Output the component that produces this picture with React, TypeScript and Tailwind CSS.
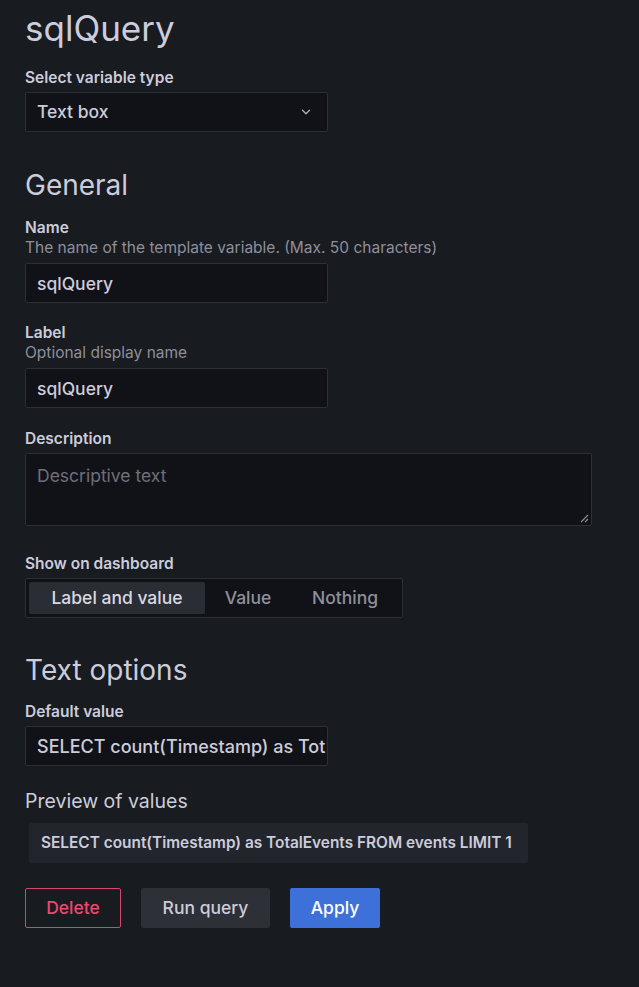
import { ChevronDown } from 'lucide-react';

const font = { fontFamily: 'Inter, "Noto Sans", sans-serif' };

function FieldLabel({ children, className = '' }: { children: React.ReactNode; className?: string }) {
  return (
    <div className={`text-[15.5px] font-semibold leading-[20px] text-[#ccccdc] ${className}`}>
      {children}
    </div>
  );
}

function Hint({ children }: { children: React.ReactNode }) {
  return <div className="text-[15.5px] leading-[20px] text-[#8f8f9c]">{children}</div>;
}

function TextInput({ value, className = '' }: { value: string; className?: string }) {
  return (
    <input
      readOnly
      value={value}
      className={`block h-[40px] w-[303px] rounded-[2px] border border-[#2c2f35] bg-[#111217] pl-[11px] pr-[1px] font-medium text-[#ccccdc] outline-none ${className}`}
      style={font}
    />
  );
}

export default function App() {
  return (
    <div className="min-h-[987px] w-full bg-[#181b1f] pl-[25px]" style={font}>
      <h1 className="pt-[8px] text-[35px] leading-[40px] font-normal text-[#ccccdc]">sqlQuery</h1>

      <FieldLabel className="mt-[20px]">Select variable type</FieldLabel>
      <div className="mt-[4px] flex h-[40px] w-[303px] items-center justify-between rounded-[2px] border border-[#2c2f35] bg-[#111217] pl-[11px] pr-[14px] text-[17.5px] font-medium text-[#ccccdc]">
        <span>Text box</span>
        <ChevronDown className="h-[14px] w-[14px] text-[#a8a8b4]" strokeWidth={2.5} />
      </div>

      <h2 className="mt-[36px] text-[28px] leading-[34px] font-normal text-[#ccccdc]">General</h2>

      <FieldLabel className="mt-[16px]">Name</FieldLabel>
      <Hint>The name of the template variable. (Max. 50 characters)</Hint>
      <TextInput value="sqlQuery" className="mt-[5px] text-[17.5px]" />

      <FieldLabel className="mt-[20px]">Label</FieldLabel>
      <Hint>Optional display name</Hint>
      <TextInput value="sqlQuery" className="mt-[5px] text-[17.5px]" />

      <FieldLabel className="mt-[21px]">Description</FieldLabel>
      <div className="relative mt-[4px] h-[73px] w-[567px] rounded-[2px] border border-[#2c2f35] bg-[#111217] px-[11px] pt-[10px] text-[17.5px] leading-[24px] text-[#6f6f7b]">
        Descriptive text
        <svg className="absolute bottom-[2px] right-[2px]" width="9" height="9" viewBox="0 0 9 9">
          <path d="M1 8L8 1M5 8L8 5" stroke="#8a8a94" strokeWidth="1.2" />
        </svg>
      </div>

      <FieldLabel className="mt-[28px]">Show on dashboard</FieldLabel>
      <div className="mt-[4px] flex h-[40px] w-[378px] items-center gap-[4px] rounded-[2px] border border-[#2c2f35] bg-[#111217] px-[3px] text-[17.5px] font-medium">
        <div className="flex h-[32px] w-[176px] items-center justify-center rounded-[2px] bg-[#2a2d33] text-[#d8d8e4]">
          Label and value
        </div>
        <div className="flex h-[32px] w-[78px] items-center justify-center text-[#8f8f9c]">Value</div>
        <div className="flex h-[32px] w-[108px] items-center justify-center text-[#8f8f9c]">Nothing</div>
      </div>

      <h2 className="mt-[35px] text-[28px] leading-[34px] font-normal text-[#ccccdc]">Text options</h2>

      <FieldLabel className="mt-[15px]">Default value</FieldLabel>
      <TextInput
        value="SELECT count(Timestamp) as TotalEvents FROM events LIMIT 1"
        className="mt-[4px] text-[18px]"
      />

      <div className="mt-[23px] text-[19.5px] leading-[24px] text-[#ccccdc]">Preview of values</div>
      <div className="ml-[4px] mt-[10px] flex h-[40px] w-[499px] items-center rounded-[2px] bg-[#22252b] px-[12px] text-[15.4px] font-semibold text-[#ccccdc]">
        SELECT count(Timestamp) as TotalEvents FROM events LIMIT 1
      </div>

      <div className="mt-[25px] flex gap-[20px] text-[17.5px] font-medium">
        <button className="h-[40px] w-[96px] rounded-[2px] border border-[#d4466c] bg-transparent text-[#f0456f]">
          Delete
        </button>
        <button className="h-[40px] w-[129px] rounded-[2px] bg-[#2d3036] text-[#ccccdc]">Run query</button>
        <button className="h-[40px] w-[90px] rounded-[2px] bg-[#3d71d9] text-white">Apply</button>
      </div>
    </div>
  );
}
